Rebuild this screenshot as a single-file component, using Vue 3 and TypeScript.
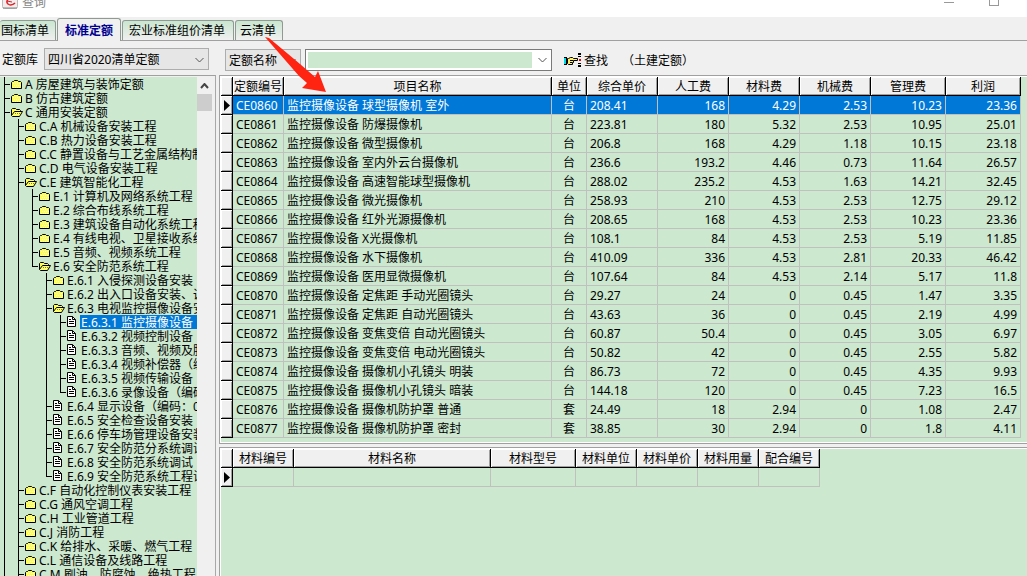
<script setup lang="ts">
import { ref } from 'vue'

type Kind = 'closed' | 'open' | 'doc'
interface TreeNode {
  label: string
  kind: Kind
  guides: string
}

// guides: one letter per level; v = line, s = blank, t = branch, l = last branch
const nodes: TreeNode[] = [
  ['t', 'closed', 'A 房屋建筑与装饰定额'],
  ['t', 'closed', 'B 仿古建筑定额'],
  ['t', 'open', 'C 通用安装定额'],
  ['vt', 'closed', 'C.A 机械设备安装工程'],
  ['vt', 'closed', 'C.B 热力设备安装工程'],
  ['vt', 'closed', 'C.C 静置设备与工艺金属结构制作'],
  ['vt', 'closed', 'C.D 电气设备安装工程'],
  ['vt', 'open', 'C.E 建筑智能化工程'],
  ['vvt', 'closed', 'E.1 计算机及网络系统工程'],
  ['vvt', 'closed', 'E.2 综合布线系统工程'],
  ['vvt', 'closed', 'E.3 建筑设备自动化系统工程'],
  ['vvt', 'closed', 'E.4 有线电视、卫星接收系统工程'],
  ['vvt', 'closed', 'E.5 音频、视频系统工程'],
  ['vvl', 'open', 'E.6 安全防范系统工程'],
  ['vvst', 'closed', 'E.6.1 入侵探测设备安装'],
  ['vvst', 'closed', 'E.6.2 出入口设备安装、调试'],
  ['vvst', 'open', 'E.6.3 电视监控摄像设备安装'],
  ['vvsvt', 'doc', 'E.6.3.1 监控摄像设备'],
  ['vvsvt', 'doc', 'E.6.3.2 视频控制设备'],
  ['vvsvt', 'doc', 'E.6.3.3 音频、视频及脉冲'],
  ['vvsvt', 'doc', 'E.6.3.4 视频补偿器（编码'],
  ['vvsvt', 'doc', 'E.6.3.5 视频传输设备'],
  ['vvsvl', 'doc', 'E.6.3.6 录像设备（编码'],
  ['vvst', 'doc', 'E.6.4 显示设备（编码：03'],
  ['vvst', 'doc', 'E.6.5 安全检查设备安装'],
  ['vvst', 'doc', 'E.6.6 停车场管理设备安装'],
  ['vvst', 'doc', 'E.6.7 安全防范分系统调试'],
  ['vvst', 'doc', 'E.6.8 安全防范系统调试'],
  ['vvsl', 'doc', 'E.6.9 安全防范系统工程试运行'],
  ['vt', 'closed', 'C.F 自动化控制仪表安装工程'],
  ['vt', 'closed', 'C.G 通风空调工程'],
  ['vt', 'closed', 'C.H 工业管道工程'],
  ['vt', 'closed', 'C.J 消防工程'],
  ['vt', 'closed', 'C.K 给排水、采暖、燃气工程'],
  ['vt', 'closed', 'C.L 通信设备及线路工程'],
  ['vt', 'closed', 'C.M 刷油、防腐蚀、绝热工程'],
].map(([guides, kind, label]) => ({ guides, kind: kind as Kind, label }))

const tabs = ['国标清单', '标准定额', '宏业标准组价清单', '云清单']
const activeTab = ref(1)
const selectedNode = ref(17)
const selectedRow = ref(0)
const keyword = ref('')

const headers = ['定额编号', '项目名称', '单位', '综合单价', '人工费', '材料费', '机械费', '管理费', '利润']
const rows: string[][] = [
  ['CE0860', '监控摄像设备 球型摄像机 室外', '台', '208.41', '168', '4.29', '2.53', '10.23', '23.36'],
  ['CE0861', '监控摄像设备 防爆摄像机', '台', '223.81', '180', '5.32', '2.53', '10.95', '25.01'],
  ['CE0862', '监控摄像设备 微型摄像机', '台', '206.8', '168', '4.29', '1.18', '10.15', '23.18'],
  ['CE0863', '监控摄像设备 室内外云台摄像机', '台', '236.6', '193.2', '4.46', '0.73', '11.64', '26.57'],
  ['CE0864', '监控摄像设备 高速智能球型摄像机', '台', '288.02', '235.2', '4.53', '1.63', '14.21', '32.45'],
  ['CE0865', '监控摄像设备 微光摄像机', '台', '258.93', '210', '4.53', '2.53', '12.75', '29.12'],
  ['CE0866', '监控摄像设备 红外光源摄像机', '台', '208.65', '168', '4.53', '2.53', '10.23', '23.36'],
  ['CE0867', '监控摄像设备 X光摄像机', '台', '108.1', '84', '4.53', '2.53', '5.19', '11.85'],
  ['CE0868', '监控摄像设备 水下摄像机', '台', '410.09', '336', '4.53', '2.81', '20.33', '46.42'],
  ['CE0869', '监控摄像设备 医用显微摄像机', '台', '107.64', '84', '4.53', '2.14', '5.17', '11.8'],
  ['CE0870', '监控摄像设备 定焦距 手动光圈镜头', '台', '29.27', '24', '0', '0.45', '1.47', '3.35'],
  ['CE0871', '监控摄像设备 定焦距 自动光圈镜头', '台', '43.63', '36', '0', '0.45', '2.19', '4.99'],
  ['CE0872', '监控摄像设备 变焦变倍 自动光圈镜头', '台', '60.87', '50.4', '0', '0.45', '3.05', '6.97'],
  ['CE0873', '监控摄像设备 变焦变倍 电动光圈镜头', '台', '50.82', '42', '0', '0.45', '2.55', '5.82'],
  ['CE0874', '监控摄像设备 摄像机小孔镜头 明装', '台', '86.73', '72', '0', '0.45', '4.35', '9.93'],
  ['CE0875', '监控摄像设备 摄像机小孔镜头 暗装', '台', '144.18', '120', '0', '0.45', '7.23', '16.5'],
  ['CE0876', '监控摄像设备 摄像机防护罩 普通', '套', '24.49', '18', '2.94', '0', '1.08', '2.47'],
  ['CE0877', '监控摄像设备 摄像机防护罩 密封', '套', '38.85', '30', '2.94', '0', '1.8', '4.11'],
]
const materialHeaders = ['材料编号', '材料名称', '材料型号', '材料单位', '材料单价', '材料用量', '配合编号']
</script>

<template>
  <div class="window">
    <header class="titlebar">
      <svg class="logo" width="16" height="16" viewBox="0 0 16 16" aria-hidden="true">
        <rect x="0.5" y="0.5" width="15" height="15" rx="2" fill="#f4ecec" stroke="#bbb" />
        <path d="M1 15h14" stroke="#888" />
        <path d="M12 4C7 4 3 8 6 11c2 1.500 5 1 7-1" fill="none" stroke="#d8232a" stroke-width="1.500" />
        <path d="M5 8l5 1" stroke="#d8232a" />
      </svg>
      <span class="title">查询</span>
      <span class="spacer"></span>
      <button class="win-btn" aria-label="最小化"><svg width="12" height="12"><path d="M1 8.500h10" stroke="#999" /></svg></button>
      <button class="win-btn" aria-label="最大化"><svg width="12" height="12"><rect x="1.500" y="2.500" width="9" height="9" fill="none" stroke="#999" /></svg></button>
    </header>

    <nav class="tabs" role="tablist">
      <button
        v-for="(t, i) in tabs"
        :key="t"
        role="tab"
        class="tab"
        :class="{ active: i === activeTab }"
        :aria-selected="i === activeTab"
        @click="activeTab = i"
      >{{ t }}</button>
    </nav>

    <div class="toolbar">
      <div class="bar-left">
        <label class="text" for="library">定额库</label>
        <span class="select-box library">
          <select id="library"><option>四川省2020清单定额</option></select>
          <svg class="chev" width="9" height="6"><path d="M0.500 1l4 4l4-4" fill="none" stroke="#555" /></svg>
        </span>
      </div>
      <div class="bar-right">
        <span class="select-box field">
          <select aria-label="查询字段"><option>定额名称</option></select>
          <svg class="chev" width="9" height="6"><path d="M0.500 1l4 4l4-4" fill="none" stroke="#555" /></svg>
        </span>
        <div class="combo">
          <input v-model="keyword" type="text" aria-label="查询内容" />
          <button aria-label="展开"><svg width="9" height="6"><path d="M0.500 1l4 4l4-4" fill="none" stroke="#555" /></svg></button>
        </div>
        <button class="find">
          <svg width="17" height="14" viewBox="0 0 17 14" aria-hidden="true">
            <path d="M0 4h3v8h-3z" fill="#00dce8" />
            <path d="M0 4.500h3M0 11.500h3M2.500 4v8" fill="none" stroke="#000" />
            <path d="M3.500 5.500h1l2-1h2l1 1h4v2h-4v2h-1v2h-4l-1-1z" fill="#fff06a" stroke="#000" />
            <path d="M6 7.500h3M6 9.500h2" stroke="#000" />
            <path d="M14 0h3v2h-3zM14 3h3v1h-3zM14 10h3v1h-3zM14 12h3v2h-3z" fill="#000" />
            <path d="M15 6h2v2h-2z" fill="#e00" />
          </svg>
          <span class="text">查找</span>
        </button>
        <span class="note text">（土建定额）</span>
      </div>
    </div>

    <main class="body">
      <aside class="tree-panel">
        <ul class="tree" role="tree">
          <li
            v-for="(n, i) in nodes"
            :key="n.label"
            role="treeitem"
            :aria-selected="i === selectedNode"
            @click="selectedNode = i"
          >
            <span v-for="(g, k) in n.guides" :key="k" class="guide" :class="'g-' + g"></span>
            <svg v-if="n.kind === 'closed'" class="icon" width="13" height="14" viewBox="0 0 13 14">
              <path d="M0.500 11.500v-6l1-1h1l1-1h3l1 1h2l1 1v6z" fill="#ffff4a" stroke="#000" />
              <path d="M2 6.500h7M3 8.500h7M2 10.500h7" stroke="#fff" stroke-dasharray="1 1" />
            </svg>
            <svg v-else-if="n.kind === 'open'" class="icon" width="13" height="14" viewBox="0 0 13 14">
              <path d="M0.500 10.500v-6l1-1h3l1 1h3l1 1v2" fill="#ffff4a" stroke="#000" />
              <path d="M0.500 10.500l3-4h8l-3 5h-7z" fill="#ffff6a" stroke="#000" />
              <path d="M4 8.500h6" stroke="#777" stroke-dasharray="1 1" />
            </svg>
            <svg v-else class="icon" width="13" height="14" viewBox="0 0 13 14">
              <path d="M0.500 1.500h5l3 3v7h-8z" fill="#fff" stroke="#000" />
              <path d="M5.500 1.500v3h3M2 4.500h2M2 6.500h5M2 8.500h5" fill="none" stroke="#000" />
            </svg>
            <span class="node-label" :class="{ selected: i === selectedNode }">{{ n.label }}</span>
          </li>
        </ul>
        <div class="scrollbar">
          <button aria-label="向上滚动"><svg width="9" height="6"><path d="M1 5l3.500-4l3.500 4" fill="none" stroke="#444" stroke-width="2" /></svg></button>
          <div class="thumb"></div>
        </div>
      </aside>

      <section class="grids">
        <div class="grid-box">
          <table class="quota">
            <colgroup>
              <col class="c12" /><col class="c51" /><col class="c268" /><col class="c35" />
              <col class="c71" /><col class="c71" /><col class="c71" /><col class="c71" />
              <col class="c75" /><col class="c75" />
            </colgroup>
            <thead>
              <tr><td class="mark"></td><th v-for="h in headers" :key="h" scope="col">{{ h }}</th></tr>
            </thead>
            <tbody>
              <tr v-for="(r, i) in rows" :key="r[0]" :class="{ current: i === selectedRow }" @click="selectedRow = i">
                <td class="mark"><svg v-if="i === selectedRow" width="6" height="11"><path d="M0 0l6 5.500l-6 5.500z" /></svg></td>
                <td v-for="(c, k) in r" :key="k" :class="{ num: k > 3, mid: k === 2 }">{{ c }}</td>
              </tr>
            </tbody>
          </table>
        </div>
        <div class="grid-box materials-box">
          <table class="materials">
            <colgroup>
              <col class="c12" /><col class="c61" /><col class="c197" /><col class="c85" />
              <col class="c61" /><col class="c61" /><col class="c61" /><col class="c61" />
            </colgroup>
            <thead>
              <tr><td class="mark"></td><th v-for="h in materialHeaders" :key="h" scope="col">{{ h }}</th></tr>
            </thead>
            <tbody>
              <tr>
                <td class="mark"><svg width="6" height="11"><path d="M0 0l6 5.500l-6 5.500z" /></svg></td>
                <td v-for="h in materialHeaders" :key="h"></td>
              </tr>
            </tbody>
          </table>
        </div>
      </section>
    </main>

    <svg class="pointer" width="64" height="58" viewBox="264 36 64 58" aria-hidden="true">
      <path d="M265 37L269 38L300 64L315 77L318 71L326 92L302 88L307 83L299 76Z" fill="#ff2412" />
    </svg>
  </div>
</template>

<style>
body {
  margin: 0;
}
</style>

<style scoped>
.window {
  position: relative;
  display: flex;
  flex-direction: column;
  height: 100vh;
  overflow: hidden;
  background: #f0f0f0;
  color: #000;
  font-family: "Noto Sans", "Noto Sans CJK SC", sans-serif;
  font-size: 12px;
  line-height: 18px;
}
button,
input,
select {
  font: inherit;
  color: inherit;
  margin: 0;
  padding: 0;
  border: 0;
  background: none;
  border-radius: 0;
}
svg {
  display: block;
  flex: none;
}

.titlebar {
  display: flex;
  align-items: flex-end;
  height: 17px;
  overflow: hidden;
  background: #fff;
}
.logo {
  margin: 0 4px 8px 2px;
}
.title {
  margin-bottom: 5px;
  color: #888;
}
.spacer {
  flex: 1;
}
.win-btn {
  margin: 0 27px 11px 6px;
}

.tabs {
  display: flex;
  align-items: flex-end;
  gap: 1px;
  height: 24px;
  box-sizing: border-box;
  border-bottom: 1px solid #a0a0a0;
}
.tab {
  height: 20px;
  padding: 1px 8px 0 6px;
  border: 1px solid #8f9a93;
  border-bottom: 0;
  border-radius: 3px 3px 0 0;
  background: linear-gradient(#c9e6cf, #f0f0f0);
  white-space: nowrap;
}
.tab:first-child {
  padding-left: 1px;
  padding-right: 6px;
  border-left: 0;
}
.tab:last-child {
  padding-left: 4px;
  padding-right: 6px;
}
.tab.active {
  height: 23px;
  margin-bottom: -1px;
  padding: 1px 7px 0;
  background: #f0f0f0;
  color: #000090;
  font-weight: 700;
}

.toolbar {
  display: flex;
  align-items: center;
  height: 34px;
  padding-top: 2px;
  box-sizing: border-box;
}
.text {
  padding-top: 2px;
}
.bar-left {
  display: flex;
  align-items: center;
  gap: 6px;
  width: 223px;
  padding-left: 2px;
}
.bar-right {
  display: flex;
  align-items: center;
  padding-top: 2px;
}
.select-box {
  position: relative;
  display: flex;
  border: 1px solid #adadad;
  background: #e6e6e6;
}
.select-box select {
  width: 100%;
  height: 20px;
  padding: 2px 3px 0;
  appearance: none;
}
.library {
  width: 163px;
}
.field {
  width: 74px;
}
.chev {
  position: absolute;
  right: 4px;
  top: 8px;
}
.combo {
  display: flex;
  align-items: center;
  width: 247px;
  height: 22px;
  margin-left: 4px;
  box-sizing: border-box;
  border: 1px solid #7a7a7a;
  background: #fff;
}
.combo input {
  flex: 1;
  min-width: 0;
  height: 16px;
  margin-left: 2px;
  background: #cce8cf;
}
.combo button {
  padding: 0 4px 0 6px;
}
.find {
  display: flex;
  align-items: center;
  gap: 3px;
  margin-left: 12px;
}
.note {
  margin-left: 14px;
}

.body {
  display: flex;
  flex: 1;
  min-height: 0;
}
.tree-panel {
  display: flex;
  flex: none;
  width: 215px;
  border-top: 1px solid #a0a0a0;
  border-right: 1px solid #a8a8a8;
  padding-top: 1px;
}
.tree {
  flex: 1;
  min-width: 0;
  margin: 0;
  padding: 0;
  overflow: hidden;
  list-style: none;
  background: #cce8cf;
}
.tree li {
  display: flex;
  height: 14px;
  line-height: 16px;
  white-space: nowrap;
}
.guide {
  flex: none;
  width: 14px;
  background-repeat: no-repeat;
}
.g-v {
  background-image: linear-gradient(#000, #000);
  background-position: 4px 0;
  background-size: 1px 100%;
}
.g-t,
.g-l {
  width: 11px;
  background-image: linear-gradient(#000, #000), linear-gradient(#000, #000);
  background-position: 4px 0, 4px 7px;
  background-size: 1px 100%, 6px 1px;
}
.g-l {
  background-size: 1px 8px, 6px 1px;
}
.node-label {
  flex: 1 0 auto;
  padding-left: 1px;
}
.node-label.selected {
  background: #0078d7;
  color: #fff;
}
.scrollbar {
  width: 15px;
  margin-right: 3px;
  background: #f0f0f0;
}
.scrollbar button {
  display: grid;
  place-items: center;
  width: 15px;
  height: 17px;
}
.scrollbar .thumb {
  height: 17px;
  background: #cdcdcd;
}

.grids {
  display: flex;
  flex: 1;
  flex-direction: column;
  gap: 3px;
  min-width: 0;
  margin-left: 3px;
}
.grid-box {
  padding: 1px 0 5px 1px;
  overflow: hidden;
  border: 1px solid #a0a0a0;
  border-right: 0;
  background: #cce8cf;
  box-shadow: inset 1px 1px #fff, inset 0 -1px #fff;
}
.materials-box {
  flex: 1;
  border-bottom: 0;
  box-shadow: inset 1px 1px #fff;
}
table {
  table-layout: fixed;
  border-collapse: separate;
  border-spacing: 0;
}
.quota {
  width: 800px;
}
.materials {
  width: 599px;
}
.c12 { width: 12px; }
.c35 { width: 35px; }
.c51 { width: 51px; }
.c61 { width: 61px; }
.c71 { width: 71px; }
.c75 { width: 75px; }
.c85 { width: 85px; }
.c197 { width: 197px; }
.c268 { width: 268px; }
th,
td {
  height: 19px;
  padding: 2px 3px 0;
  box-sizing: border-box;
  overflow: hidden;
  line-height: 16px;
  white-space: nowrap;
  border-right: 1px solid #c0c0c0;
  border-bottom: 1px solid #c0c0c0;
}
th {
  padding: 2px 0 0;
  border-color: #000;
  background: #f0f0f0;
  box-shadow: inset 1px 1px #fff, inset -1px -1px #a0a0a0;
  font-weight: 400;
  text-align: center;
}
.mark {
  padding: 0 0 0 3px;
  border-color: #000;
  background: #f0f0f0;
  box-shadow: inset 1px 1px #fff, inset -1px -1px #a0a0a0;
}
.num {
  text-align: right;
}
.mid {
  text-align: center;
}
.current td:not(.mark) {
  background: #0078d7;
  color: #fff;
}

.pointer {
  position: absolute;
  left: 264px;
  top: 36px;
  pointer-events: none;
}
</style>
